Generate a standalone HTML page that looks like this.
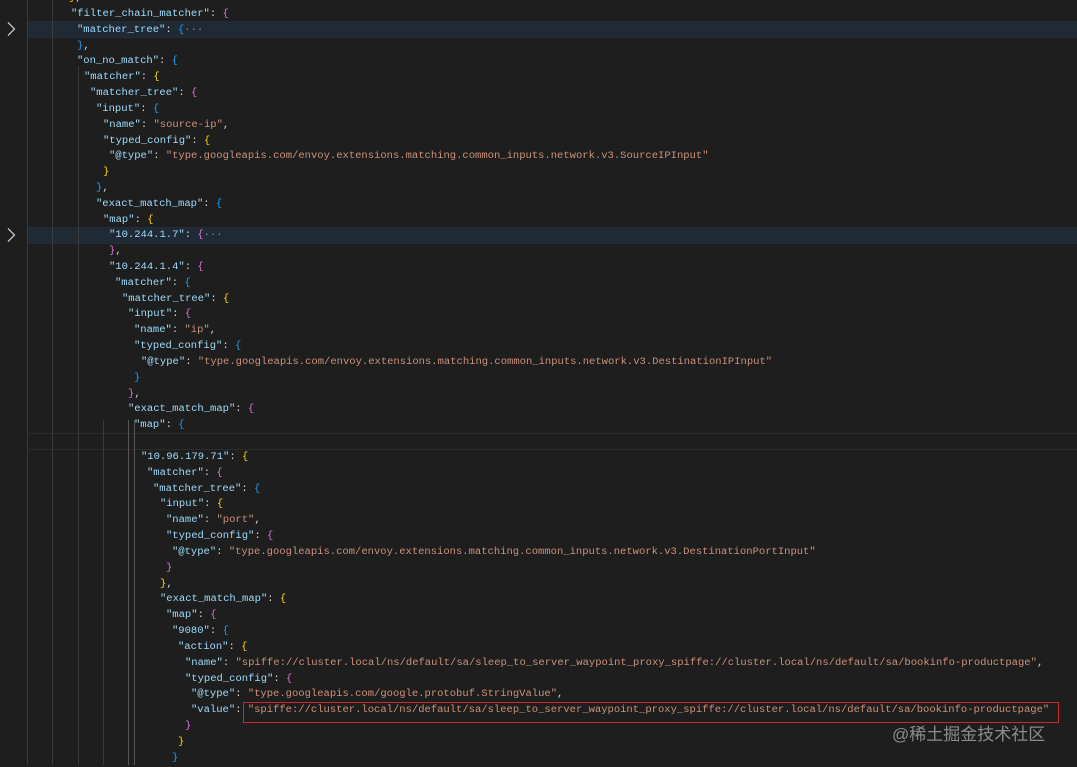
<!DOCTYPE html>
<html><head><meta charset="utf-8"><style>
html,body{margin:0;padding:0}
body{width:1077px;height:765px;background:#1e1e1e;overflow:hidden;position:relative;font-family:"Liberation Mono",monospace;font-size:10.53px}
#c{position:absolute;left:0;top:2px;width:1077px;height:765px}
.l{position:absolute;white-space:pre;height:15.85px;line-height:15.85px;color:#d4d4d4}
.k{color:#9cdcfe}.s{color:#ce9178}.g{color:#ffd700}.p{color:#da70d6}.b{color:#179fff}.d{color:#8a8a8a}
.hl{position:absolute;left:27px;right:0;height:15px;background:#1f2a35;border-top:1px solid #222c36;border-bottom:1px solid #222c36}
.vg{position:absolute;top:0;bottom:0;width:1px;background:#3a3a3a}
.arr{position:absolute;left:5px}
</style></head><body>
<div class="hl" style="top:21px"></div>
<div class="hl" style="top:227px"></div>
<div style="position:absolute;left:27px;right:0;top:433px;height:15px;border-top:1px solid #2c2c2c;border-bottom:1px solid #2c2c2c"></div>
<div class="vg" style="left:27px"></div>
<div class="vg" style="left:52px"></div>
<div class="vg" style="left:78px;top:66px"></div>
<div class="vg" style="left:103px;top:420px"></div>
<div class="vg" style="left:128px;top:420px;background:#555"></div>
<div class="vg" style="left:134px;top:420px;background:#555"></div>
<svg class="arr" style="top:21px" width="12" height="16" viewBox="0 0 12 16"><path d="M3 1.5 L9.5 8 L3 14.5" fill="none" stroke="#c5c5c5" stroke-width="1.3"/></svg>
<svg class="arr" style="top:227px" width="12" height="16" viewBox="0 0 12 16"><path d="M3 1.5 L9.5 8 L3 14.5" fill="none" stroke="#c5c5c5" stroke-width="1.3"/></svg>
<div id="c">
<div class="l" style="top:-11px;left:69px"><span class="g">}</span>,</div>
<div class="l" style="top:5px;left:71px"><span class="k">"filter_chain_matcher"</span>: <span class="p">{</span></div>
<div class="l" style="top:21px;left:77px"><span class="k">"matcher_tree"</span>: <span class="b">{</span><span class="d">···</span></div>
<div class="l" style="top:37px;left:77px"><span class="b">}</span>,</div>
<div class="l" style="top:52px;left:77px"><span class="k">"on_no_match"</span>: <span class="b">{</span></div>
<div class="l" style="top:68px;left:84px"><span class="k">"matcher"</span>: <span class="g">{</span></div>
<div class="l" style="top:84px;left:90px"><span class="k">"matcher_tree"</span>: <span class="p">{</span></div>
<div class="l" style="top:100px;left:96px"><span class="k">"input"</span>: <span class="b">{</span></div>
<div class="l" style="top:116px;left:103px"><span class="k">"name"</span>: <span class="s">"source-ip"</span>,</div>
<div class="l" style="top:132px;left:103px"><span class="k">"typed_config"</span>: <span class="g">{</span></div>
<div class="l" style="top:147px;left:109px"><span class="k">"@type"</span>: <span class="s">"type.googleapis.com/envoy.extensions.matching.common_inputs.network.v3.SourceIPInput"</span></div>
<div class="l" style="top:163px;left:103px"><span class="g">}</span></div>
<div class="l" style="top:179px;left:96px"><span class="b">}</span>,</div>
<div class="l" style="top:195px;left:96px"><span class="k">"exact_match_map"</span>: <span class="b">{</span></div>
<div class="l" style="top:211px;left:103px"><span class="k">"map"</span>: <span class="g">{</span></div>
<div class="l" style="top:226px;left:109px"><span class="k">"10.244.1.7"</span>: <span class="p">{</span><span class="d">···</span></div>
<div class="l" style="top:242px;left:109px"><span class="p">}</span>,</div>
<div class="l" style="top:258px;left:109px"><span class="k">"10.244.1.4"</span>: <span class="p">{</span></div>
<div class="l" style="top:274px;left:115px"><span class="k">"matcher"</span>: <span class="b">{</span></div>
<div class="l" style="top:290px;left:122px"><span class="k">"matcher_tree"</span>: <span class="g">{</span></div>
<div class="l" style="top:305px;left:128px"><span class="k">"input"</span>: <span class="p">{</span></div>
<div class="l" style="top:321px;left:134px"><span class="k">"name"</span>: <span class="s">"ip"</span>,</div>
<div class="l" style="top:337px;left:134px"><span class="k">"typed_config"</span>: <span class="b">{</span></div>
<div class="l" style="top:353px;left:141px"><span class="k">"@type"</span>: <span class="s">"type.googleapis.com/envoy.extensions.matching.common_inputs.network.v3.DestinationIPInput"</span></div>
<div class="l" style="top:369px;left:134px"><span class="b">}</span></div>
<div class="l" style="top:385px;left:128px"><span class="p">}</span>,</div>
<div class="l" style="top:400px;left:128px"><span class="k">"exact_match_map"</span>: <span class="p">{</span></div>
<div class="l" style="top:416px;left:134px"><span class="k">"map"</span>: <span class="b">{</span></div>
<div class="l" style="top:448px;left:141px"><span class="k">"10.96.179.71"</span>: <span class="g">{</span></div>
<div class="l" style="top:464px;left:147px"><span class="k">"matcher"</span>: <span class="p">{</span></div>
<div class="l" style="top:480px;left:153px"><span class="k">"matcher_tree"</span>: <span class="b">{</span></div>
<div class="l" style="top:495px;left:160px"><span class="k">"input"</span>: <span class="g">{</span></div>
<div class="l" style="top:511px;left:166px"><span class="k">"name"</span>: <span class="s">"port"</span>,</div>
<div class="l" style="top:527px;left:166px"><span class="k">"typed_config"</span>: <span class="p">{</span></div>
<div class="l" style="top:543px;left:172px"><span class="k">"@type"</span>: <span class="s">"type.googleapis.com/envoy.extensions.matching.common_inputs.network.v3.DestinationPortInput"</span></div>
<div class="l" style="top:559px;left:166px"><span class="p">}</span></div>
<div class="l" style="top:575px;left:160px"><span class="g">}</span>,</div>
<div class="l" style="top:590px;left:160px"><span class="k">"exact_match_map"</span>: <span class="g">{</span></div>
<div class="l" style="top:606px;left:166px"><span class="k">"map"</span>: <span class="p">{</span></div>
<div class="l" style="top:622px;left:172px"><span class="k">"9080"</span>: <span class="b">{</span></div>
<div class="l" style="top:638px;left:178px"><span class="k">"action"</span>: <span class="g">{</span></div>
<div class="l" style="top:654px;left:185px"><span class="k">"name"</span>: <span class="s">"spiffe://cluster.local/ns/default/sa/sleep_to_server_waypoint_proxy_spiffe://cluster.local/ns/default/sa/bookinfo-productpage"</span>,</div>
<div class="l" style="top:670px;left:185px"><span class="k">"typed_config"</span>: <span class="p">{</span></div>
<div class="l" style="top:685px;left:191px"><span class="k">"@type"</span>: <span class="s">"type.googleapis.com/google.protobuf.StringValue"</span>,</div>
<div class="l" style="top:701px;left:191px"><span class="k">"value"</span>: <span class="s">"spiffe://cluster.local/ns/default/sa/sleep_to_server_waypoint_proxy_spiffe://cluster.local/ns/default/sa/bookinfo-productpage"</span></div>
<div class="l" style="top:717px;left:185px"><span class="p">}</span></div>
<div class="l" style="top:733px;left:178px"><span class="g">}</span></div>
<div class="l" style="top:749px;left:172px"><span class="b">}</span></div>
</div>
<div style="position:absolute;left:243px;top:702px;width:814px;height:19px;border:1px solid #c42b2b"></div>
<div style="position:absolute;left:892px;top:720px;color:#8c8c8c;font-family:'Liberation Sans','Noto Sans CJK SC',sans-serif;font-size:17px;white-space:nowrap">@稀土掘金技术社区</div>
</body></html>
